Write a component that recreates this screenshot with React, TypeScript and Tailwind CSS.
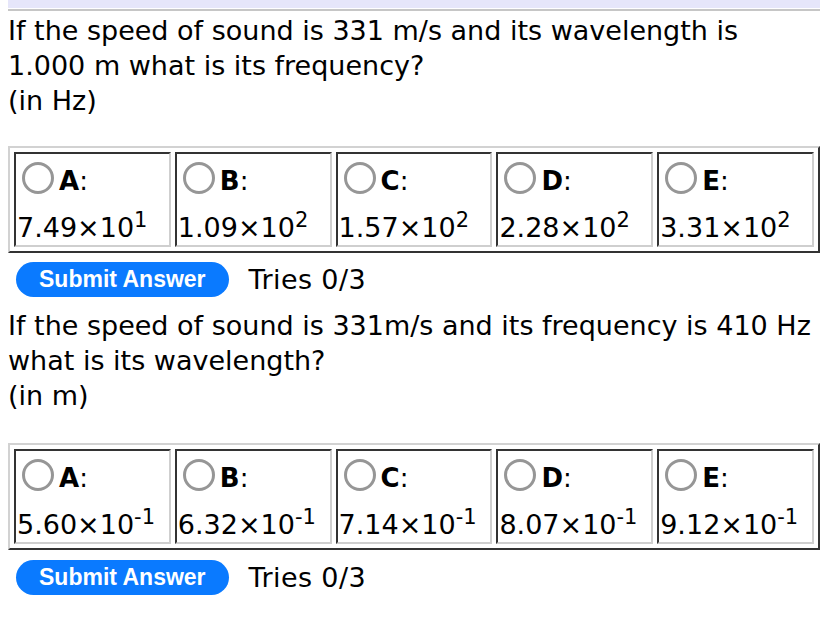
import React from 'react';

type Choice = { letter: string; mant: string; exp: string };

const Q1: Choice[] = [
  { letter: 'A', mant: '7.49×10', exp: '1' },
  { letter: 'B', mant: '1.09×10', exp: '2' },
  { letter: 'C', mant: '1.57×10', exp: '2' },
  { letter: 'D', mant: '2.28×10', exp: '2' },
  { letter: 'E', mant: '3.31×10', exp: '2' },
];

const Q2: Choice[] = [
  { letter: 'A', mant: '5.60×10', exp: '-1' },
  { letter: 'B', mant: '6.32×10', exp: '-1' },
  { letter: 'C', mant: '7.14×10', exp: '-1' },
  { letter: 'D', mant: '8.07×10', exp: '-1' },
  { letter: 'E', mant: '9.12×10', exp: '-1' },
];

function ChoiceCell({ c }: { c: Choice }) {
  return (
    <div className="flex-1 min-w-0 border-2 border-t-[#333] border-l-[#333] border-b-[#cfcfcf] border-r-[#cfcfcf] pt-[8px] pl-[1px]">
      {/* radio + letter */}
      <div className="flex items-start h-[40px]">
        <span className="ml-[5px] w-[32px] h-[32px] rounded-full border-[3px] border-[#969696] bg-white shrink-0" />
        <span className="ml-[5px] mt-[3px] text-[26px] leading-[32px]">
          <b>{c.letter}</b>:
        </span>
      </div>
      <div className="mt-[8px] whitespace-nowrap">
        {c.mant}
        <sup className="text-[21px] leading-none align-super top-0">{c.exp}</sup>
      </div>
    </div>
  );
}

function ChoiceTable({ choices }: { choices: Choice[] }) {
  return (
    <div className="flex gap-[4px] p-[4px] border-2 border-t-[#d2d2d2] border-l-[#d2d2d2] border-b-[#333] border-r-[#333]">
      {choices.map((c) => (
        <ChoiceCell key={c.letter} c={c} />
      ))}
    </div>
  );
}

function SubmitRow() {
  return (
    <div className="flex items-center">
      <button className="ml-[8px] h-[35px] px-[23px] rounded-full bg-[#0a7aff] text-white font-bold text-[23px] leading-none font-['Liberation_Sans',Arial,sans-serif]">
        Submit Answer
      </button>
      <span className="ml-[20px] tracking-[0.4px]">Tries 0/3</span>
    </div>
  );
}

export default function App() {
  return (
    <div className="min-h-screen bg-white text-black px-2 font-['DejaVu_Sans',Verdana,sans-serif] text-[27px] leading-[35px]">
      <div className="h-[8px] bg-[#e6e6fa]" />
      <div className="mt-[1px] h-[2px] bg-[#c6c6c6]" />

      {/* Question 1 */}
      <div className="pt-[2px]">
        <div className="whitespace-nowrap">If the speed of sound is 331 m/s and its wavelength is</div>
        <div className="whitespace-nowrap">1.000 m what is its frequency?</div>
        <div>(in Hz)</div>
      </div>
      <div className="mt-[28px]">
        <ChoiceTable choices={Q1} />
      </div>
      <div className="mt-[9px]">
        <SubmitRow />
      </div>

      {/* Question 2 */}
      <div className="pt-[11px]">
        <div className="whitespace-nowrap">If the speed of sound is 331m/s and its frequency is 410 Hz</div>
        <div className="whitespace-nowrap">what is its wavelength?</div>
        <div>(in m)</div>
      </div>
      <div className="mt-[30px]">
        <ChoiceTable choices={Q2} />
      </div>
      <div className="mt-[10px]">
        <SubmitRow />
      </div>
    </div>
  );
}
